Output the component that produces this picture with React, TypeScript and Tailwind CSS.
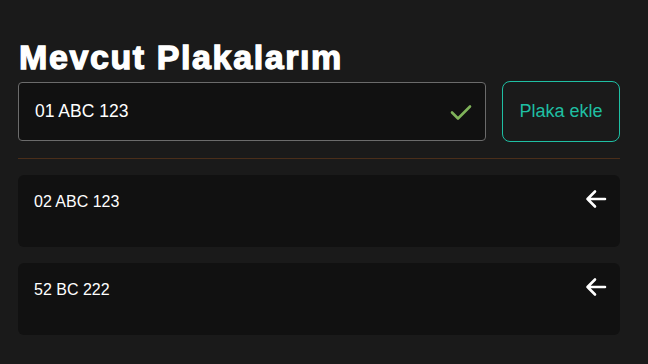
import React, { useState } from "react";

const plates = ["02 ABC 123", "52 BC 222"];

const CheckIcon = () => (
  <svg width="24" height="24" viewBox="0 0 24 24" fill="none" stroke="#7fb35a" strokeWidth="2.6" strokeLinecap="round" strokeLinejoin="round">
    <path d="M3 12.5l6 6L21 6.5" />
  </svg>
);

const ArrowIcon = () => (
  <svg width="24" height="24" viewBox="0 0 24 24" fill="none" stroke="#ffffff" strokeWidth="2.6" strokeLinecap="round" strokeLinejoin="round">
    <path d="M21 12H3.5M11 4.5L3.5 12l7.5 7.5" />
  </svg>
);

export default function App() {
  const [plate, setPlate] = useState("01 ABC 123");

  return (
    <div className="min-h-[364px] w-full bg-[#1a1a1a] pl-[18px] pr-[28px] pt-[38px] font-['Liberation_Sans',Arial,sans-serif] text-white">
      <h1 className="ml-px text-[34px] leading-[38px] font-black tracking-[1.6px] text-white [-webkit-text-stroke:1.3px_white]">
        Mevcut Plakalarım
      </h1>
      <div className="mt-[5px] flex items-center gap-4">
        <div className="relative flex h-[59px] flex-1 items-center rounded-[4px] border border-[#6b6b6b] bg-[#111111]">
          <input
            className="h-full w-full bg-transparent pl-4 pr-12 text-[17.5px] text-white outline-none"
            value={plate}
            onChange={e => setPlate(e.target.value)}
          />
          <span className="absolute right-[12px] top-[17px]">
            <CheckIcon />
          </span>
        </div>
        <button className="h-[61px] w-[118px] rounded-[8px] border border-[#1fbfa3] bg-transparent text-[18px] text-[#1fbfa3]">
          Plaka ekle
        </button>
      </div>
      <div className="mt-4 h-px w-full bg-[#4a2e1a]" />
      <div className="mt-4 flex flex-col gap-4 pb-[29px]">
        {plates.map(p => (
          <div key={p} className="flex h-[72px] items-start justify-between rounded-[6px] bg-[#111111] pl-4 pr-[12px]">
            <span className="mt-[17px] text-[16px] leading-[20px] text-white">{p}</span>
            <span className="mt-[12px]">
              <ArrowIcon />
            </span>
          </div>
        ))}
      </div>
    </div>
  );
}
